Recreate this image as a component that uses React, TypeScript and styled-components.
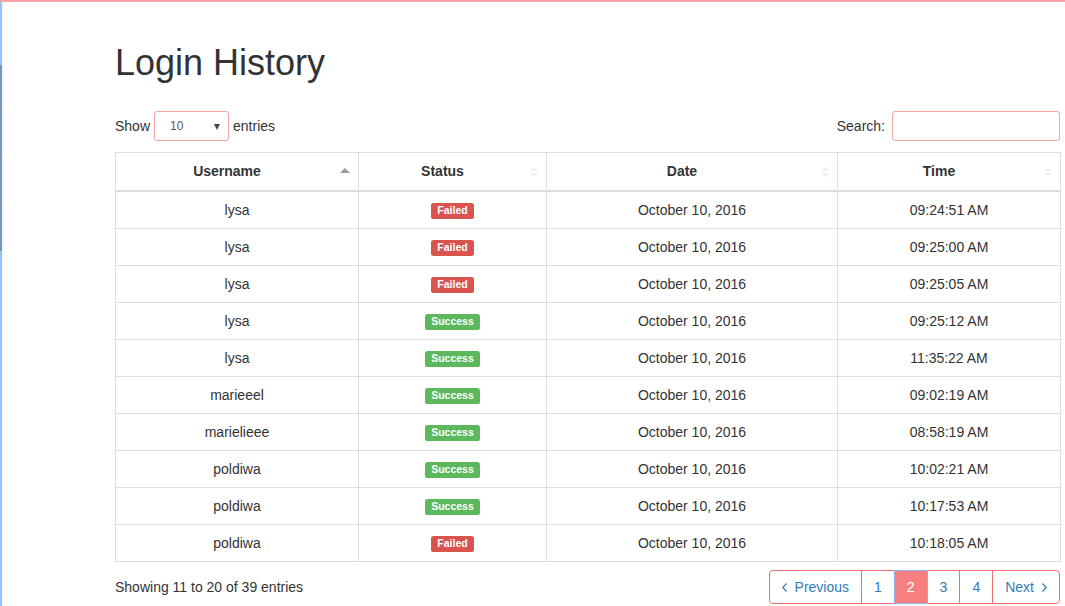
import * as React from 'react';
import styled, { createGlobalStyle } from 'styled-components';

const GlobalStyle = createGlobalStyle`
  html, body {
    margin: 0;
    padding: 0;
    background: #fff;
  }
  body {
    font-family: "Liberation Sans", Arial, Helvetica, sans-serif;
    font-size: 14px;
    line-height: 20px;
    color: #333;
  }
  * { box-sizing: border-box; }
`;

const Page = styled.div`
  display: flex;
  flex-direction: column;
  min-height: 100vh;
  overflow: hidden;
`;

const TopBar = styled.div`
  height: 2px;
  background: #f9a3a3;
  flex-shrink: 0;
`;

const Body = styled.div`
  display: flex;
  flex: 1;
`;

const Rail = styled.div`
  flex-shrink: 0;
  width: 2px;
  display: flex;
  flex-direction: column;
  background: #93c6f8;
  border-right: 1px solid #eef2f6;
  box-sizing: content-box;
`;

const RailSegment = styled.div<{ $dark?: boolean; $h: number }>`
  height: ${(p) => p.$h}px;
  background: ${(p) => (p.$dark ? '#7098c4' : '#93c6f8')};
  border-bottom: ${(p) => (p.$dark ? '1px solid #8f8c7c' : 'none')};
`;

const Main = styled.main`
  flex: 1;
  padding: 0 0 0 112px;
`;

const Title = styled.h1`
  margin: 41px 0 28px;
  font-size: 36px;
  line-height: 40px;
  font-weight: 500;
  color: #333;
`;

const Toolbar = styled.div`
  display: flex;
  justify-content: space-between;
  align-items: center;
  width: 945px;
  height: 30px;
  margin-bottom: 11px;
`;

const ToolLabel = styled.label`
  display: flex;
  align-items: center;
  gap: 4px;
  color: #333;
  line-height: 18px;
`;

const SelectBox = styled.div`
  position: relative;
  width: 75px;
  height: 30px;
  border: 1px solid #f5a4a4;
  border-radius: 3px;
  padding-left: 15px;
  font-size: 12px;
  line-height: 28px;
  color: #555;
  &:after {
    content: "";
    position: absolute;
    right: 8px;
    top: 12px;
    border-left: 3.5px solid transparent;
    border-right: 3.5px solid transparent;
    border-top: 6px solid #444;
  }
`;

const SearchInput = styled.input`
  width: 168px;
  height: 30px;
  margin-left: 3px;
  border: 1px solid #f5a4a4;
  border-radius: 3px;
  outline: none;
`;

const Table = styled.table`
  width: 945px;
  table-layout: fixed;
  border-collapse: collapse;
  border: 1px solid #ddd;
`;

const HeadCell = styled.th`
  position: relative;
  padding: 8px 30px 9px 10px;
  border: 1px solid #ddd;
  border-bottom: 2px solid #ddd;
  font-weight: bold;
  text-align: center;
  line-height: 20px;
  color: #333;
`;

const SortIcon = styled.svg`
  position: absolute;
  right: 8px;
  top: 13px;
`;

const Cell = styled.td`
  padding: 8px;
  border: 1px solid #ddd;
  text-align: center;
  line-height: 20px;
  color: #333;
  height: 37px;
`;

const Badge = styled.span<{ $ok: boolean }>`
  display: inline-block;
  padding: 0.2em 0.6em 0.3em;
  font-size: 10.5px;
  font-weight: bold;
  line-height: 1;
  color: #fff;
  border-radius: 0.25em;
  vertical-align: 1px;
  background: ${(p) => (p.$ok ? '#5cb85c' : '#d9534f')};
`;

const Footer = styled.div`
  display: flex;
  justify-content: space-between;
  align-items: center;
  margin-top: 8px;
  width: 945px;
`;

const Pager = styled.ul`
  display: flex;
  margin: 0;
  padding: 0;
  list-style: none;
`;

const PageItem = styled.li<{ $active?: boolean; $first?: boolean; $last?: boolean }>`
  position: relative;
  display: flex;
  align-items: center;
  padding: 6px 12px;
  line-height: 20px;
  color: ${(p) => (p.$active ? '#fff' : '#337ab7')};
  background: ${(p) => (p.$active ? '#f77f7f' : '#fff')};
  border: 1px solid ${(p) => (p.$active ? '#8fb1ec' : '#f06e6e')};
  margin-left: ${(p) => (p.$first ? '0' : '-1px')};
  z-index: ${(p) => (p.$active ? 2 : 1)};
  border-radius: ${(p) => (p.$first ? '4px 0 0 4px' : p.$last ? '0 4px 4px 0' : '0')};
`;

const Chevron = styled.svg<{ $side: 'left' | 'right' }>`
  margin-right: ${(p) => (p.$side === 'left' ? '8px' : '0')};
  margin-left: ${(p) => (p.$side === 'right' ? '8px' : '0')};
`;

type Row = { user: string; ok: boolean; time: string };

const rows: Row[] = [
  { user: 'lysa', ok: false, time: '09:24:51 AM' },
  { user: 'lysa', ok: false, time: '09:25:00 AM' },
  { user: 'lysa', ok: false, time: '09:25:05 AM' },
  { user: 'lysa', ok: true, time: '09:25:12 AM' },
  { user: 'lysa', ok: true, time: '11:35:22 AM' },
  { user: 'marieeel', ok: true, time: '09:02:19 AM' },
  { user: 'marielieee', ok: true, time: '08:58:19 AM' },
  { user: 'poldiwa', ok: true, time: '10:02:21 AM' },
  { user: 'poldiwa', ok: true, time: '10:17:53 AM' },
  { user: 'poldiwa', ok: false, time: '10:18:05 AM' },
];

const SortArrows = ({ active }: { active?: boolean }) =>
  active ? (
    <SortIcon width="10" height="10" viewBox="0 0 10 10">
      <path d="M0 7 L5 2 L10 7 Z" fill="#9a9a9a" />
    </SortIcon>
  ) : (
    <SortIcon width="8" height="12" viewBox="0 0 8 12">
      <path d="M0 5 L4 1 L8 5 Z M0 7 L4 11 L8 7 Z" fill="#f0f0f0" />
    </SortIcon>
  );

const ChevronIcon = ({ side }: { side: 'left' | 'right' }) => (
  <Chevron $side={side} width="5" height="9" viewBox="0 0 5 9">
    <path
      d={side === 'left' ? 'M4.5 0.5 L0.8 4.5 L4.5 8.5' : 'M0.5 0.5 L4.2 4.5 L0.5 8.5'}
      fill="none"
      stroke="#337ab7"
      strokeWidth="1.2"
    />
  </Chevron>
);

export default function App() {
  return (
    <Page>
      <GlobalStyle />
      <TopBar />
      <Body>
        <Rail>
          <RailSegment $h={63} />
          <RailSegment $dark $h={46} />
          <RailSegment $dark $h={47} />
          <RailSegment $dark $h={46} />
          <RailSegment $dark $h={47} />
        </Rail>
        <Main>
          <Title>Login History</Title>
          <Toolbar>
            <ToolLabel>
              Show <SelectBox>10</SelectBox> entries
            </ToolLabel>
            <ToolLabel>
              Search: <SearchInput type="search" />
            </ToolLabel>
          </Toolbar>
          <Table>
            <colgroup>
              <col style={{ width: 243 }} />
              <col style={{ width: 188 }} />
              <col style={{ width: 291 }} />
              <col style={{ width: 223 }} />
            </colgroup>
            <thead>
              <tr>
                <HeadCell>Username<SortArrows active /></HeadCell>
                <HeadCell>Status<SortArrows /></HeadCell>
                <HeadCell>Date<SortArrows /></HeadCell>
                <HeadCell>Time<SortArrows /></HeadCell>
              </tr>
            </thead>
            <tbody>
              {rows.map((r, i) => (
                <tr key={i}>
                  <Cell>{r.user}</Cell>
                  <Cell>
                    <Badge $ok={r.ok}>{r.ok ? 'Success' : 'Failed'}</Badge>
                  </Cell>
                  <Cell>October 10, 2016</Cell>
                  <Cell>{r.time}</Cell>
                </tr>
              ))}
            </tbody>
          </Table>
          <Footer>
            <span>Showing 11 to 20 of 39 entries</span>
            <Pager>
              <PageItem $first>
                <ChevronIcon side="left" />Previous
              </PageItem>
              <PageItem>1</PageItem>
              <PageItem $active>2</PageItem>
              <PageItem>3</PageItem>
              <PageItem>4</PageItem>
              <PageItem $last>
                Next<ChevronIcon side="right" />
              </PageItem>
            </Pager>
          </Footer>
        </Main>
      </Body>
    </Page>
  );
}
